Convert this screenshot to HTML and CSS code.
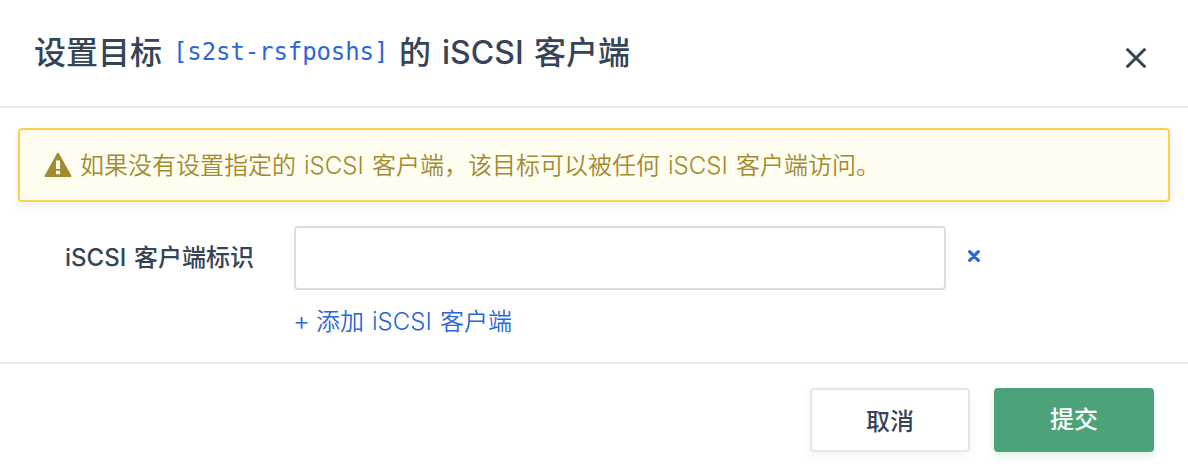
FILE: index.html
```
<!DOCTYPE html>
<html lang="zh-CN">
<head>
<meta charset="utf-8">
<title>iSCSI 客户端</title>
<link rel="stylesheet" href="styles.css">
</head>
<body>
<div class="modal">
  <header class="header">
    <h1 class="title"><span>设置目标</span><span class="target">[s2st-rsfposhs]</span><span>的</span><span class="title-latin">iSCSI</span><span>客户端</span></h1>
    <button class="close" aria-label="关闭"><svg width="24" height="24" viewBox="0 0 24 24"><path d="M2.7 2.7 21.3 21.3M21.3 2.7 2.7 21.3"/></svg></button>
  </header>
  <main class="body">
    <div class="alert">
      <svg class="warning" width="28" height="26" viewBox="0 0 28 26"><path fill-rule="evenodd" d="M12.9 1.6Q14 0 15.1 1.6L27 23Q28 25 26 25H2Q0 25 1 23ZM12 8.5V17H16V8.5ZM12 18.8V22.3H16V18.8Z"/></svg>
      <p class="message"><span>如果没有设置指定的</span><span class="latin">iSCSI</span><span>客户端，该目标可以被任何</span><span class="latin">iSCSI</span><span>客户端访问。</span></p>
    </div>
    <div class="field">
      <label class="label" for="client"><span class="label-latin">iSCSI</span><span>客户端标识</span></label>
      <div class="control">
        <div class="row">
          <input class="input" id="client" type="text">
          <button class="remove" aria-label="删除"><svg width="14" height="14" viewBox="0 0 14 14"><path d="M2.7 2.7 11.3 11.3M11.3 2.7 2.7 11.3"/></svg></button>
        </div>
        <a class="add"><span class="plus">+</span><span>添加</span><span class="latin">iSCSI</span><span>客户端</span></a>
      </div>
    </div>
  </main>
  <footer class="footer">
    <button class="button cancel">取消</button>
    <button class="button submit">提交</button>
  </footer>
</div>
</body>
</html>
```
FILE: styles.css
```
* { box-sizing: border-box; }
body {
  margin: 0;
  background: #fff;
  color: #364457;
  font-family: Inter, "Noto Sans CJK SC", sans-serif;
  font-size: 24px;
}
button { padding: 0; border: 0; background: none; font: inherit; color: inherit; }
.modal { height: 470px; display: flex; flex-direction: column; overflow: hidden; }
.header {
  height: 108px;
  padding: 0 40px 0 34px;
  border-bottom: 2px solid #e4e9ee;
  display: flex;
  justify-content: space-between;
}
.title {
  margin: 29px 0 0;
  height: 48px;
  display: flex;
  align-items: baseline;
  font-size: 32px;
  line-height: 48px;
  font-weight: 500;
  white-space: nowrap;
}
.target {
  align-self: flex-start;
  width: 216px;
  margin: 0 10px 0 11px;
  font: 400 24px/46px "DejaVu Sans Mono", monospace;
  letter-spacing: -0.1px;
  color: #2b67d6;
}
.title-latin { width: 83px; margin-left: 11px; margin-right: 9px; }
.close { width: 24px; height: 24px; margin-top: 46px; }
.close svg, .remove svg { display: block; fill: none; stroke: #364457; stroke-width: 3; }
.body { height: 254px; padding: 20px 18px 0; }
.alert {
  height: 74px;
  padding: 0 24px;
  display: flex;
  align-items: center;
  border: 2px solid #fad150;
  border-radius: 4px;
  background: #fffdf0;
  color: #a08b30;
  box-shadow: 0 4px 8px rgba(0, 0, 0, .07);
}
.warning { fill: #a08b30; }
.message {
  margin: 2px 0 0 8px;
  display: flex;
  align-items: baseline;
  font-weight: 350;
  line-height: 36px;
  white-space: nowrap;
}
.latin { width: 61px; margin: 0 7px 0 8px; }
.field { display: flex; margin-top: 24px; padding-left: 47px; }
.label {
  width: 229px;
  height: 64px;
  display: flex;
  align-items: baseline;
  line-height: 63px;
  font-weight: 500;
  white-space: nowrap;
}
.label-latin { width: 62px; margin-right: 7px; }
.row { display: flex; align-items: center; height: 64px; }
.input {
  width: 652px;
  height: 64px;
  padding: 0 16px;
  border: 2px solid #d7dde6;
  border-radius: 4px;
  background: #fff;
  font: inherit;
}
.remove { width: 14px; height: 14px; margin: -4px 0 0 21px; }
.remove svg { stroke: #2b67d6; stroke-width: 3.2; stroke-linecap: round; }
.add {
  display: flex;
  align-items: baseline;
  margin-top: 14px;
  line-height: 36px;
  color: #2b67d6;
  font-weight: 350;
  white-space: nowrap;
}
.plus { width: 15px; margin: 0 8px 0 -1px; font-size: 26px; line-height: 30px; }
.footer {
  height: 108px;
  padding: 24px 34px 0;
  border-top: 2px solid #e4e9ee;
  display: flex;
  justify-content: flex-end;
  gap: 24px;
}
.button {
  width: 160px;
  height: 64px;
  border-radius: 4px;
  font-weight: 500;
  line-height: 60px;
}
.cancel { padding-top: 2px; border: 2px solid #e2e7ef; box-shadow: 0 4px 8px rgba(50, 80, 120, .06); }
.submit { background: #4da379; color: #fff; box-shadow: 0 4px 8px rgba(77, 163, 121, .18); }
```
